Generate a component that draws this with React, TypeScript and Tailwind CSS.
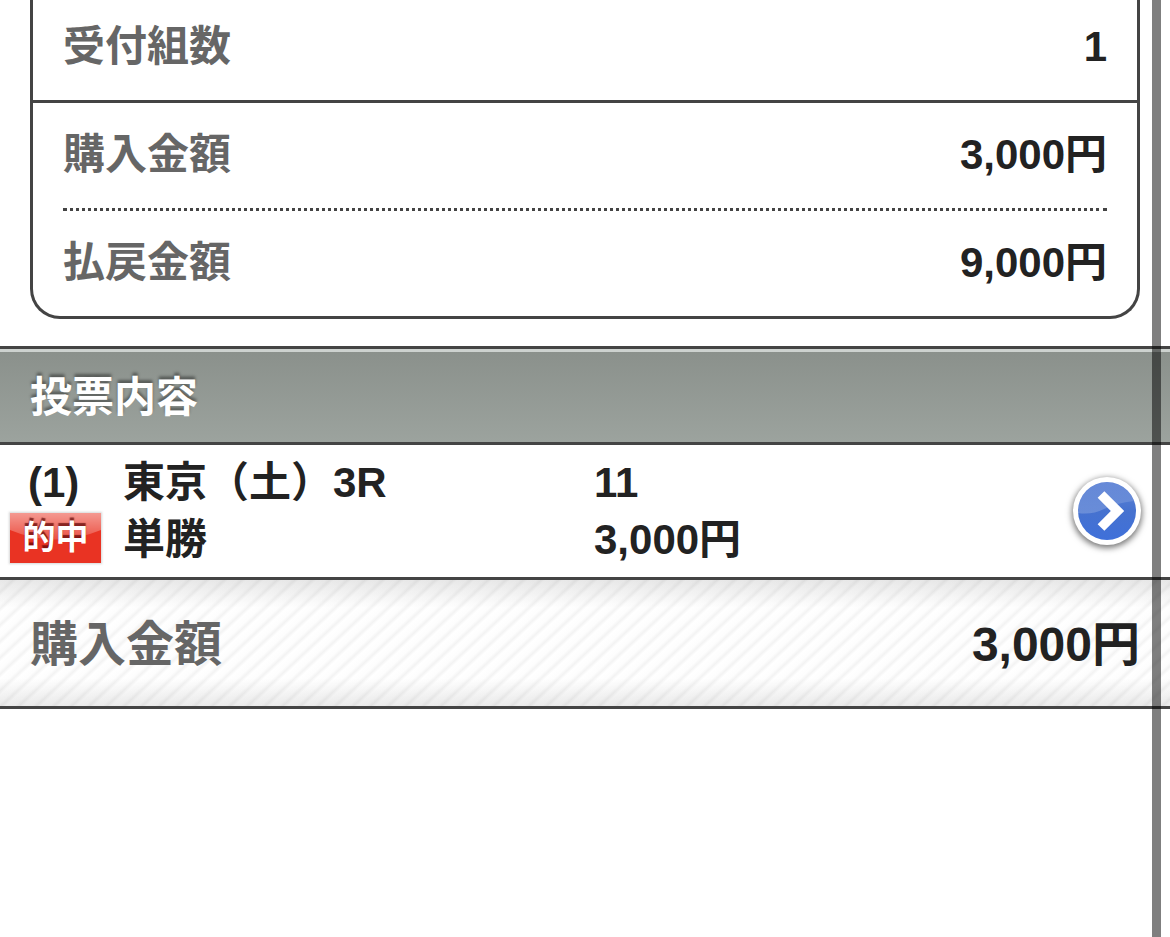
import clsx from 'clsx'

interface AmountRowProps {
  label: string
  value: string
}

function SummaryRow({ label, value }: AmountRowProps) {
  return (
    <div className="flex h-[105px] items-center justify-between pb-[2px] leading-[60px]">
      <dt className="text-[#666666]">{label}</dt>
      <dd>{value}</dd>
    </div>
  )
}

function SummaryBox() {
  return (
    <section className="mx-[30px] -mt-[5px] rounded-b-[30px] border-x-[3px] border-b-[3px] border-[#444444]">
      <dl>
        <div className="border-b-[3px] border-[#444444] px-[30px]">
          <SummaryRow label="受付組数" value="1" />
        </div>
        <div className="px-[30px]">
          <div className="border-b-[3px] border-dotted border-[#444444]">
            <SummaryRow label="購入金額" value="3,000円" />
          </div>
          <SummaryRow label="払戻金額" value="9,000円" />
        </div>
      </dl>
    </section>
  )
}

function HitBadge() {
  return (
    <span className="relative flex h-[50px] w-[91px] items-center justify-center overflow-hidden bg-[#e93323] text-[33px] leading-[50px] text-white shadow-[0_0_2px_1px_rgba(120,120,120,0.3)]">
      <svg className="absolute inset-0 h-full w-full" viewBox="0 0 91 50" preserveAspectRatio="none" aria-hidden="true">
        <defs>
          <linearGradient id="gloss" x1="0" y1="0" x2="0" y2="1">
            <stop offset="0" stopColor="#fff" stopOpacity="0.5" />
            <stop offset="1" stopColor="#fff" stopOpacity="0.15" />
          </linearGradient>
        </defs>
        <path d="M0 0H91V17Q45 36 0 17Z" fill="url(#gloss)" />
      </svg>
      <span className="relative [text-shadow:0_-3px_1px_rgba(90,0,0,0.7)]">的中</span>
    </span>
  )
}

function DetailButton() {
  return (
    <button
      type="button"
      aria-label="詳細"
      className="flex size-[68px] shrink-0 items-center justify-center rounded-full bg-white shadow-[0_2px_6px_1px_rgba(0,0,0,0.55)]"
    >
      <svg className="size-[58px]" viewBox="0 0 58 58" aria-hidden="true">
        <defs>
          <linearGradient id="ball" x1="0" y1="0" x2="0" y2="1">
            <stop offset="0" stopColor="#5f84d6" />
            <stop offset="0.5" stopColor="#4672cf" />
            <stop offset="1" stopColor="#3f70da" />
          </linearGradient>
          <linearGradient id="shine" x1="0" y1="0" x2="0" y2="1">
            <stop offset="0" stopColor="#fff" stopOpacity="0.05" />
            <stop offset="1" stopColor="#fff" stopOpacity="0.2" />
          </linearGradient>
        </defs>
        <circle cx="29" cy="29" r="29" fill="url(#ball)" />
        <path d="M0 29A29 29 0 0 1 56 19Q38 21 26 27T0 31Z" fill="url(#shine)" />
        <path d="M23 12.500L39.500 29L23 45.500" fill="none" stroke="#fff" strokeWidth="9.500" />
      </svg>
    </button>
  )
}

const bets = [
  { no: '(1)', race: '東京（土）3R', type: '単勝', pick: '11', amount: '3,000円', hit: true },
]

function BetList() {
  return (
    <ul>
      {bets.map((bet) => (
        <li key={bet.no} className="flex items-center border-b-[3px] border-[#444444] py-[9px] pr-[29px] leading-[57px]">
          <div className="w-[123px] shrink-0">
            <p className="pl-[28px]">{bet.no}</p>
            <div className={clsx('flex h-[57px] items-start pl-[10px] pt-[2px]', !bet.hit && 'invisible')}>
              <HitBadge />
            </div>
          </div>
          <div className="w-[471px] shrink-0">
            <p>{bet.race}</p>
            <p>{bet.type}</p>
          </div>
          <div className="flex-1">
            <p>{bet.pick}</p>
            <p>{bet.amount}</p>
          </div>
          <DetailButton />
        </li>
      ))}
    </ul>
  )
}

function TotalRow({ label, value }: AmountRowProps) {
  return (
    <dl className="flex h-[129px] items-center justify-between border-b-[3px] border-[#444444] bg-[linear-gradient(to_bottom,rgba(0,0,0,0.09),transparent_22%,transparent_78%,rgba(0,0,0,0.08)),repeating-linear-gradient(137deg,#ffffff_0px,#fdfdfd_6px,#f3f3f3_9px,#ffffff_12px)] px-[30px] pt-[4px] text-[48px] leading-[60px]">
      <dt className="text-[#666666]">{label}</dt>
      <dd>{value}</dd>
    </dl>
  )
}

export default function App() {
  return (
    <div className="relative min-h-screen overflow-hidden bg-white font-['Liberation_Sans','Noto_Sans_CJK_JP',sans-serif] text-[42px] font-bold text-[#222222]">
      <main>
        <SummaryBox />
        <h2 className="mt-[27px] flex h-[99px] items-center border-y-[3px] border-[#444444] bg-linear-to-b from-[#8a908b] to-[#9ca39e] px-[30px] pt-[3px] text-white shadow-[inset_0_3px_0_#cdd2cf] [text-shadow:0_-3px_3px_rgba(0,0,0,0.4)]">
          投票内容
        </h2>
        <BetList />
        <TotalRow label="購入金額" value="3,000円" />
      </main>
      <div className="absolute inset-y-0 right-[9px] w-[9px] bg-black/50" aria-hidden="true" />
    </div>
  )
}
